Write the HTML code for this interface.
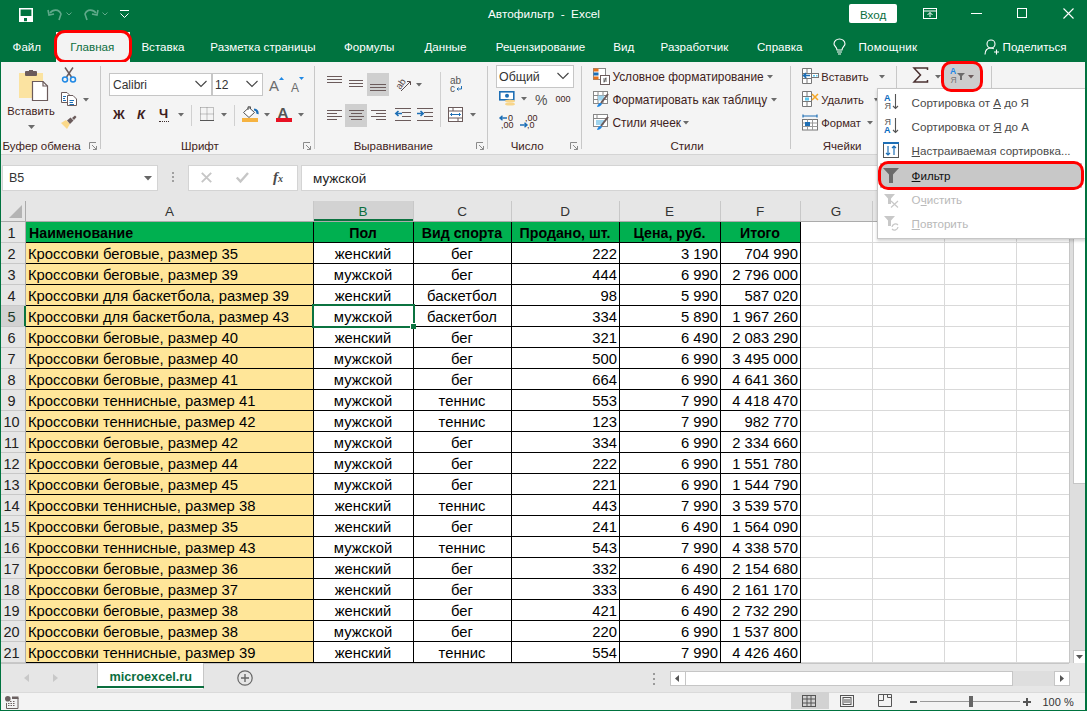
<!DOCTYPE html><html><head><meta charset="utf-8"><style>
*{margin:0;padding:0;box-sizing:border-box}
html,body{width:1087px;height:711px;overflow:hidden;background:#00733f}
body{position:relative;font-family:"Liberation Sans",sans-serif;}
div{position:absolute}
svg{position:absolute;overflow:visible}
.t{white-space:nowrap;line-height:1}
.tab{color:#fff;font-size:11.6px}
.rl{color:#3f1d20;font-size:11.5px}
.cell{font-size:14.8px;color:#000;white-space:nowrap;line-height:21px;overflow:hidden}
.hdr{font-size:14.2px;font-weight:bold;color:#000;white-space:nowrap;line-height:20px;overflow:hidden}
.mi{font-size:12px;color:#4a4a4a}
.mid{font-size:12px;color:#b4b4b4}
</style></head><body>
<svg style="left:19px;top:8px" width="14" height="14" viewBox="0 0 14 14"><path d="M0.8 0.8H13.2V13.2H0.8Z" fill="none" stroke="#fff" stroke-width="1.6"/><path d="M0.8 8H13.2V13.2H0.8Z" fill="#fff"/><rect x="5" y="10" width="3" height="3.2" fill="#00733f"/></svg>
<svg style="left:47px;top:8px" width="16" height="13" viewBox="0 0 16 13"><path d="M3 5 C6 1 12 1 14 6 L12 12" fill="none" stroke="#5fa98a" stroke-width="1.6"/><path d="M1 2 L2 7 L7 6" fill="none" stroke="#5fa98a" stroke-width="1.6"/></svg>
<svg style="left:66px;top:12px" width="6" height="4" viewBox="0 0 6 4"><path d="M0.5 0.5L3 3L5.5 0.5" fill="none" stroke="#5fa98a" stroke-width="1"/></svg>
<svg style="left:83px;top:8px" width="16" height="13" viewBox="0 0 16 13"><path d="M13 5 C10 1 4 1 2 6 L4 12" fill="none" stroke="#5fa98a" stroke-width="1.6"/><path d="M15 2 L14 7 L9 6" fill="none" stroke="#5fa98a" stroke-width="1.6"/></svg>
<svg style="left:102px;top:12px" width="6" height="4" viewBox="0 0 6 4"><path d="M0.5 0.5L3 3L5.5 0.5" fill="none" stroke="#5fa98a" stroke-width="1"/></svg>
<svg style="left:120px;top:10px" width="9" height="9" viewBox="0 0 9 9"><path d="M0 0.5H9" stroke="#fff" stroke-width="1"/><path d="M0.5 3.5L4.5 7.5L8.5 3.5" fill="none" stroke="#fff" stroke-width="1"/></svg>
<div class="t" style="left:488px;top:9px;color:#fff;font-size:11.8px">Автофильтр&nbsp; - &nbsp;Excel</div>
<div style="left:849px;top:4px;width:48px;height:19px;background:#fff;border-radius:2px"></div>
<div class="t" style="left:860px;top:9px;color:#0b6e3e;font-size:11.6px">Вход</div>
<svg style="left:923px;top:8px" width="14" height="11" viewBox="0 0 14 11"><rect x="0.5" y="0.5" width="13" height="10" fill="none" stroke="#fff"/><path d="M0.5 3H13.5" stroke="#fff"/><path d="M7 9V4.5M4.5 7L7 4.5L9.5 7" fill="none" stroke="#fff"/></svg>
<div style="left:971px;top:13px;width:11px;height:1px;background:#fff"></div>
<div style="left:1017px;top:8px;width:10px;height:10px;border:1px solid #fff"></div>
<svg style="left:1063px;top:8px" width="11" height="11" viewBox="0 0 11 11"><path d="M0.5 0.5L10.5 10.5M10.5 0.5L0.5 10.5" stroke="#fff" stroke-width="1.1"/></svg>
<div class="t" style="left:12.6px;top:41px;color:#fff;font-size:11.6px">Файл</div>
<div class="t" style="left:141.4px;top:41px;color:#fff;font-size:11.6px">Вставка</div>
<div class="t" style="left:210.3px;top:41px;color:#fff;font-size:11.6px">Разметка страницы</div>
<div class="t" style="left:344px;top:41px;color:#fff;font-size:11.6px">Формулы</div>
<div class="t" style="left:424.5px;top:41px;color:#fff;font-size:11.6px">Данные</div>
<div class="t" style="left:495.7px;top:41px;color:#fff;font-size:11.6px">Рецензирование</div>
<div class="t" style="left:613.3px;top:41px;color:#fff;font-size:11.6px">Вид</div>
<div class="t" style="left:660.6px;top:41px;color:#fff;font-size:11.6px">Разработчик</div>
<div class="t" style="left:757px;top:41px;color:#fff;font-size:11.6px">Справка</div>
<div style="left:56px;top:32px;width:74px;height:31px;background:#f3f3f3"></div>
<div class="t" style="left:70.2px;top:41px;color:#0b6e3e;font-size:11.6px">Главная</div>
<div style="left:54px;top:30px;width:78px;height:33px;border:3px solid #f00;border-radius:11px"></div>
<svg style="left:833px;top:39px" width="13" height="16" viewBox="0 0 13 16"><path d="M4 11 C4 8 1 7 1 5 A5.5 5 0 0 1 12 5 C12 7 9 8 9 11Z" fill="none" stroke="#fff" stroke-width="1.1"/><path d="M4 13H9M5 15H8" stroke="#fff" stroke-width="1.1"/></svg>
<div class="t" style="left:858.4px;top:41px;color:#fff;font-size:11.6px;letter-spacing:0.3px">Помощник</div>
<svg style="left:984px;top:39px" width="15" height="16" viewBox="0 0 15 16"><circle cx="7" cy="5" r="4" fill="none" stroke="#fff" stroke-width="1.1"/><path d="M1 15.5C1 11 3.5 9 7 9C8 9 9 9.3 9.8 9.7" fill="none" stroke="#fff" stroke-width="1.1"/><path d="M10 13H15M12.5 10.5V15.5" stroke="#fff" stroke-width="1.1"/></svg>
<div class="t" style="left:1002.6px;top:41px;color:#fff;font-size:11.6px">Поделиться</div>
<div style="left:1px;top:62px;width:1084px;height:92px;background:#f4f4f4"></div>
<div style="left:1px;top:154px;width:1084px;height:1px;background:#d4d4d4"></div>
<div style="left:100px;top:66px;width:1px;height:83px;background:#c8c8c8"></div>
<div style="left:314px;top:66px;width:1px;height:83px;background:#c8c8c8"></div>
<div style="left:487px;top:66px;width:1px;height:83px;background:#c8c8c8"></div>
<div style="left:581px;top:66px;width:1px;height:83px;background:#c8c8c8"></div>
<div style="left:790px;top:66px;width:1px;height:83px;background:#c8c8c8"></div>
<div style="left:896px;top:66px;width:1px;height:83px;background:#c8c8c8"></div>
<div style="left:991px;top:66px;width:1px;height:83px;background:#c8c8c8"></div>
<div class="t" style="left:2.5px;top:141px;color:#3f1d20;font-size:11.5px">Буфер обмена</div>
<div class="t" style="left:181px;top:141px;color:#3f1d20;font-size:11.5px">Шрифт</div>
<div class="t" style="left:353.7px;top:141px;color:#3f1d20;font-size:11.5px">Выравнивание</div>
<div class="t" style="left:510.7px;top:141px;color:#3f1d20;font-size:11.5px">Число</div>
<div class="t" style="left:670.5px;top:141px;color:#3f1d20;font-size:11.5px">Стили</div>
<div class="t" style="left:822.8px;top:141px;color:#3f1d20;font-size:11.5px">Ячейки</div>
<svg style="left:89px;top:142px" width="8" height="8" viewBox="0 0 8 8"><path d="M0.5 7V0.5H7" fill="none" stroke="#8a8a8a"/><path d="M3 3L7.5 7.5M4 7.5H7.5V4" fill="none" stroke="#8a8a8a"/></svg>
<svg style="left:303px;top:142px" width="8" height="8" viewBox="0 0 8 8"><path d="M0.5 7V0.5H7" fill="none" stroke="#8a8a8a"/><path d="M3 3L7.5 7.5M4 7.5H7.5V4" fill="none" stroke="#8a8a8a"/></svg>
<svg style="left:476px;top:142px" width="8" height="8" viewBox="0 0 8 8"><path d="M0.5 7V0.5H7" fill="none" stroke="#8a8a8a"/><path d="M3 3L7.5 7.5M4 7.5H7.5V4" fill="none" stroke="#8a8a8a"/></svg>
<svg style="left:570px;top:142px" width="8" height="8" viewBox="0 0 8 8"><path d="M0.5 7V0.5H7" fill="none" stroke="#8a8a8a"/><path d="M3 3L7.5 7.5M4 7.5H7.5V4" fill="none" stroke="#8a8a8a"/></svg>
<svg style="left:19px;top:70px" width="30" height="31" viewBox="0 0 30 31"><rect x="0" y="3" width="24" height="25" fill="#fbe3a1"/><rect x="6" y="1" width="12" height="5" rx="1" fill="#6b5b5b"/><rect x="10" y="0" width="4" height="3" fill="#6b5b5b"/><path d="M13.5 11.5H24L28.5 16V30.5H13.5Z" fill="#fff" stroke="#6b5b5b" stroke-width="1.2"/><path d="M24 11.5V16H28.5" fill="none" stroke="#6b5b5b" stroke-width="1.2"/></svg>
<div class="t" style="left:7.3px;top:106px;color:#3f1d20;font-size:11.2px">Вставить</div>
<svg style="left:28px;top:125px" width="7" height="4" viewBox="0 0 7 4"><path d="M0 0H7L3.5 4Z" fill="#6b6b6b"/></svg>
<svg style="left:62px;top:67px" width="14" height="16" viewBox="0 0 14 16"><path d="M3 0.5L9.5 10M11 0.5L4.5 10" stroke="#6b5b5b" stroke-width="1.5"/><circle cx="3" cy="12.5" r="2.5" fill="none" stroke="#1e88e5" stroke-width="1.5"/><circle cx="11" cy="12.5" r="2.5" fill="none" stroke="#1e88e5" stroke-width="1.5"/></svg>
<svg style="left:61px;top:92px" width="16" height="14" viewBox="0 0 16 14"><path d="M0.5 0.5H6L8 2.5V10.5H0.5Z" fill="#fff" stroke="#6b5b5b"/><path d="M6.5 3.5H12L15.5 7V13.5H6.5Z" fill="#fff" stroke="#6b5b5b"/><path d="M2 4.5H5M2 6.5H4M2 8.5H5M8.5 8.5H13M8.5 10.5H12M8.5 12.5H13" stroke="#1e6fb5"/></svg>
<svg style="left:83px;top:98px" width="6" height="4" viewBox="0 0 6 4"><path d="M0 0H6L3 3.5Z" fill="#6b6b6b"/></svg>
<svg style="left:61px;top:115px" width="16" height="14" viewBox="0 0 16 14"><path d="M0 8 L5 5 L9 9 L6 14 Z" fill="#fbd98a"/><path d="M6 5.5 L9.5 2.5 L12.5 5.5 L9 9Z" fill="#6b5b5b"/><path d="M11 3L14 0.5L15.5 2L13 5" fill="#6b5b5b"/></svg>
<div style="left:109px;top:73px;width:103px;height:23px;background:#fff;border:1px solid #c6c6c6"></div>
<div class="t" style="left:113px;top:79px;color:#333;font-size:12px">Calibri</div>
<svg style="left:195px;top:80px" width="12" height="8" viewBox="0 0 12 8"><path d="M0.5 1L6 6.5L11.5 1" fill="none" stroke="#444" stroke-width="1.1"/></svg>
<div style="left:212px;top:73px;width:51px;height:23px;background:#fff;border:1px solid #c6c6c6"></div>
<div class="t" style="left:215px;top:79px;color:#333;font-size:12px">12</div>
<svg style="left:246px;top:80px" width="12" height="8" viewBox="0 0 12 8"><path d="M0.5 1L6 6.5L11.5 1" fill="none" stroke="#444" stroke-width="1.1"/></svg>
<div class="t" style="left:269px;top:78px;color:#6b6b6b;font-size:15px">A</div>
<svg style="left:279px;top:77px" width="5" height="3" viewBox="0 0 5 3"><path d="M0 3L2.5 0L5 3Z" fill="#1e88e5"/></svg>
<div class="t" style="left:291px;top:82px;color:#6b6b6b;font-size:12px">A</div>
<svg style="left:299px;top:77px" width="5" height="3" viewBox="0 0 5 3"><path d="M0 0L2.5 3L5 0Z" fill="#1e88e5"/></svg>
<div class="t" style="left:113px;top:108px;color:#3f1d20;font-size:13px;font-weight:bold">Ж</div>
<div class="t" style="left:137px;top:108px;color:#3f1d20;font-size:13px;font-weight:bold;font-style:italic">К</div>
<div class="t" style="left:159px;top:107px;color:#3f1d20;font-size:13px;font-weight:bold">Ч</div>
<div style="left:159px;top:121px;width:10px;height:1px;border-top:1px dotted #3b2b2b"></div>
<svg style="left:178px;top:113px" width="6" height="4" viewBox="0 0 6 4"><path d="M0 0H6L3 3.5Z" fill="#6b6b6b"/></svg>
<svg style="left:221px;top:113px" width="6" height="4" viewBox="0 0 6 4"><path d="M0 0H6L3 3.5Z" fill="#6b6b6b"/></svg>
<svg style="left:264px;top:113px" width="6" height="4" viewBox="0 0 6 4"><path d="M0 0H6L3 3.5Z" fill="#6b6b6b"/></svg>
<svg style="left:298px;top:113px" width="6" height="4" viewBox="0 0 6 4"><path d="M0 0H6L3 3.5Z" fill="#6b6b6b"/></svg>
<div style="left:191px;top:105px;width:1px;height:21px;background:#d0d0d0"></div>
<div style="left:234px;top:105px;width:1px;height:21px;background:#d0d0d0"></div>
<svg style="left:200px;top:107px" width="14" height="14" viewBox="0 0 14 14"><path d="M0.5 0.5H13.5V13M0.5 0.5V13M7 0.5V13M0.5 7H13.5" fill="none" stroke="#8a8a8a" stroke-dasharray="1 1"/><path d="M0 13.5H14" stroke="#555"/></svg>
<svg style="left:242px;top:106px" width="17" height="12" viewBox="0 0 17 12"><path d="M1.5 6.5L7 1.5L12.5 6.5L7 11.5Z" fill="#fff" stroke="#555"/><path d="M6 4V0.8H8.5V3" fill="none" stroke="#555"/><path d="M12 3.5 Q16 4 15.5 8" fill="none" stroke="#1e6fb5" stroke-width="2.2"/></svg>
<div style="left:242px;top:118px;width:16px;height:4px;background:#f6b341"></div>
<div class="t" style="left:277.5px;top:105px;color:#555;font-size:15px;font-weight:bold">A</div>
<div style="left:276px;top:118px;width:16px;height:4px;background:#e81123"></div>
<div style="left:327px;top:76px;width:15px;height:1px;background:#6b5b5b"></div>
<div style="left:327px;top:79px;width:15px;height:1px;background:#6b5b5b"></div>
<div style="left:327px;top:82px;width:15px;height:1px;background:#6b5b5b"></div>
<div style="left:349px;top:80px;width:14px;height:1px;background:#6b5b5b"></div>
<div style="left:349px;top:83px;width:14px;height:1px;background:#6b5b5b"></div>
<div style="left:349px;top:86px;width:14px;height:1px;background:#6b5b5b"></div>
<div style="left:367px;top:73px;width:22px;height:23px;background:#cfcfcf"></div>
<div style="left:370px;top:84px;width:16px;height:1px;background:#6b5b5b"></div>
<div style="left:370px;top:87px;width:16px;height:1px;background:#6b5b5b"></div>
<div style="left:370px;top:90px;width:16px;height:1px;background:#6b5b5b"></div>
<svg style="left:395px;top:76px" width="17" height="16" viewBox="0 0 17 16"><text x="1" y="12" font-size="9.5" fill="#5a4a4a" font-family="Liberation Sans" transform="rotate(-55 5 9)">ab</text><path d="M6 15L15 6M12 5.5H15.5V9" fill="none" stroke="#5a4a4a" stroke-width="1"/></svg>
<svg style="left:416px;top:83px" width="6" height="4" viewBox="0 0 6 4"><path d="M0 0H6L3 3.5Z" fill="#6b6b6b"/></svg>
<div style="left:327px;top:110px;width:15px;height:1px;background:#6b5b5b"></div>
<div style="left:327px;top:113px;width:10px;height:1px;background:#6b5b5b"></div>
<div style="left:327px;top:116px;width:15px;height:1px;background:#6b5b5b"></div>
<div style="left:327px;top:119px;width:10px;height:1px;background:#6b5b5b"></div>
<div style="left:345px;top:104px;width:22px;height:23px;background:#cfcfcf"></div>
<div style="left:349px;top:110px;width:15px;height:1px;background:#6b5b5b"></div>
<div style="left:351px;top:113px;width:11px;height:1px;background:#6b5b5b"></div>
<div style="left:349px;top:116px;width:15px;height:1px;background:#6b5b5b"></div>
<div style="left:351px;top:119px;width:11px;height:1px;background:#6b5b5b"></div>
<div style="left:371px;top:110px;width:15px;height:1px;background:#6b5b5b"></div>
<div style="left:376px;top:113px;width:10px;height:1px;background:#6b5b5b"></div>
<div style="left:371px;top:116px;width:15px;height:1px;background:#6b5b5b"></div>
<div style="left:376px;top:119px;width:10px;height:1px;background:#6b5b5b"></div>
<div style="left:395px;top:108px;width:16px;height:1px;background:#6b5b5b"></div>
<div style="left:402px;top:112px;width:9px;height:1px;background:#6b5b5b"></div>
<div style="left:402px;top:116px;width:9px;height:1px;background:#6b5b5b"></div>
<div style="left:395px;top:120px;width:16px;height:1px;background:#6b5b5b"></div>
<svg style="left:395px;top:110px" width="7" height="7" viewBox="0 0 7 7"><path d="M7 3.5H1M3.5 1L0.8 3.5L3.5 6" fill="none" stroke="#1e6fb5" stroke-width="1.6"/></svg>
<div style="left:417px;top:108px;width:16px;height:1px;background:#6b5b5b"></div>
<div style="left:424px;top:112px;width:9px;height:1px;background:#6b5b5b"></div>
<div style="left:424px;top:116px;width:9px;height:1px;background:#6b5b5b"></div>
<div style="left:417px;top:120px;width:16px;height:1px;background:#6b5b5b"></div>
<svg style="left:417px;top:110px" width="7" height="7" viewBox="0 0 7 7"><path d="M0 3.5H6M3.5 1L6.2 3.5L3.5 6" fill="none" stroke="#1e6fb5" stroke-width="1.6"/></svg>
<div style="left:440px;top:72px;width:1px;height:55px;background:#d0d0d0"></div>
<div class="t" style="left:450px;top:76px;color:#555;font-size:10px">ab</div>
<div class="t" style="left:450px;top:84px;color:#555;font-size:10px">c</div>
<svg style="left:456px;top:86px" width="6" height="5" viewBox="0 0 6 5"><path d="M5.5 0V3H1M2.5 1.5L1 3L2.5 4.5" fill="none" stroke="#1e6fb5"/></svg>
<svg style="left:448px;top:107px" width="15" height="15" viewBox="0 0 15 15"><rect x="0.5" y="0.5" width="14" height="14" fill="#fff" stroke="#6b5b5b"/><path d="M0.5 4H14.5M0.5 11H14.5M5 0.5V4M10 11V14.5" stroke="#6b5b5b"/><path d="M2.5 7.5H12.5M4 6L2.5 7.5L4 9M11 6L12.5 7.5L11 9" fill="none" stroke="#1e6fb5"/></svg>
<svg style="left:470px;top:113px" width="6" height="4" viewBox="0 0 6 4"><path d="M0 0H6L3 3.5Z" fill="#6b6b6b"/></svg>
<div style="left:496px;top:65px;width:78px;height:23px;background:#fff;border:1px solid #c6c6c6"></div>
<div class="t" style="left:499px;top:71px;color:#333;font-size:12.4px">Общий</div>
<svg style="left:557px;top:72px" width="12" height="8" viewBox="0 0 12 8"><path d="M0.5 1L6 6.5L11.5 1" fill="none" stroke="#444" stroke-width="1.1"/></svg>
<svg style="left:499px;top:91px" width="17" height="16" viewBox="0 0 17 16"><rect x="0.8" y="0.8" width="14" height="8" fill="#fff" stroke="#1e6fb5" stroke-width="1.6"/><circle cx="8" cy="4.8" r="2" fill="#1e6fb5"/><ellipse cx="11" cy="10" rx="5" ry="1.6" fill="#f7d58a"/><ellipse cx="11" cy="13" rx="5" ry="1.6" fill="#f7d58a"/></svg>
<svg style="left:521px;top:97px" width="6" height="4" viewBox="0 0 6 4"><path d="M0 0H6L3 3.5Z" fill="#6b6b6b"/></svg>
<div class="t" style="left:535px;top:93px;color:#555;font-size:14px">%</div>
<div class="t" style="left:555.6px;top:95px;color:#3f1d20;font-size:9px">000</div>
<div class="t" style="left:508px;top:114px;color:#3f1d20;font-size:9px">0</div>
<div class="t" style="left:501px;top:121px;color:#3f1d20;font-size:9px">,00</div>
<svg style="left:499px;top:115px" width="8" height="6" viewBox="0 0 8 6"><path d="M8 3H1M3.5 0.8L1 3L3.5 5.2" fill="none" stroke="#1e6fb5" stroke-width="1.4"/></svg>
<div class="t" style="left:525px;top:114px;color:#3f1d20;font-size:9px">,00</div>
<div class="t" style="left:527px;top:121px;color:#3f1d20;font-size:9px">,0</div>
<svg style="left:520px;top:122px" width="8" height="6" viewBox="0 0 8 6"><path d="M0 3H7M4.5 0.8L7 3L4.5 5.2" fill="none" stroke="#1e6fb5" stroke-width="1.4"/></svg>
<svg style="left:593px;top:68px" width="17" height="17" viewBox="0 0 17 17"><rect x="0.5" y="0.5" width="12" height="11" fill="#fff" stroke="#888"/><rect x="0.5" y="0.5" width="5" height="3" fill="#e8711a"/><rect x="0.5" y="4.5" width="5" height="3" fill="#1e6fb5"/><rect x="0.5" y="8.5" width="5" height="3" fill="#e8711a"/><rect x="7.5" y="7.5" width="9" height="9" fill="#fff" stroke="#6b5b5b"/><path d="M10 11H14M10 13H14M13 9.5L11 14.5" stroke="#444" stroke-width="0.8"/></svg>
<div class="t" style="left:612.4px;top:72px;color:#3f1d20;font-size:11.9px">Условное форматирование</div>
<svg style="left:767px;top:75px" width="6" height="4" viewBox="0 0 6 4"><path d="M0 0H6L3 3.5Z" fill="#6b6b6b"/></svg>
<svg style="left:593px;top:91px" width="17" height="17" viewBox="0 0 17 17"><rect x="0.5" y="0.5" width="14" height="12" fill="#fff" stroke="#888"/><path d="M0.5 4.5H14.5M0.5 8.5H14.5M5 0.5V12.5M10 0.5V12.5" stroke="#888"/><rect x="5" y="4.5" width="6" height="5" fill="#9fd3ec"/><path d="M15 3L8 12" stroke="#6b5b5b" stroke-width="2"/><path d="M4 16C5 12 8 11 9 13C8 15 6 16 4 16Z" fill="#1e88e5"/></svg>
<div class="t" style="left:612.4px;top:95px;color:#3f1d20;font-size:11.9px">Форматировать как таблицу</div>
<svg style="left:771px;top:98px" width="6" height="4" viewBox="0 0 6 4"><path d="M0 0H6L3 3.5Z" fill="#6b6b6b"/></svg>
<svg style="left:593px;top:114px" width="17" height="17" viewBox="0 0 17 17"><rect x="0.5" y="0.5" width="14" height="12" fill="#fff" stroke="#888"/><path d="M0.5 4.5H14.5M4 0.5V4.5" stroke="#888"/><rect x="3" y="6" width="8" height="5" fill="#9fd3ec"/><path d="M15 3L8 12" stroke="#6b5b5b" stroke-width="2"/><path d="M4 16C5 12 8 11 9 13C8 15 6 16 4 16Z" fill="#1e88e5"/></svg>
<div class="t" style="left:612.4px;top:118px;color:#3f1d20;font-size:11.9px">Стили ячеек</div>
<svg style="left:683px;top:121px" width="6" height="4" viewBox="0 0 6 4"><path d="M0 0H6L3 3.5Z" fill="#6b6b6b"/></svg>
<svg style="left:802px;top:68px" width="17" height="16" viewBox="0 0 17 16"><path d="M0.5 0.5H9.5V15.5H0.5ZM0.5 5.5H9.5M0.5 10.5H9.5M5 0.5V5.5M5 10.5V15.5" fill="#fff" stroke="#777"/><rect x="9.5" y="5.5" width="7" height="4" fill="#fff" stroke="#777"/><rect x="11" y="7" width="2" height="1.5" fill="#5bc8f0"/><rect x="14" y="7" width="1.5" height="1.5" fill="#5bc8f0"/><path d="M8 7.5H1.8M4.2 5.2L1.6 7.5L4.2 9.8" fill="none" stroke="#1e6fb5" stroke-width="1.7"/></svg>
<div class="t" style="left:821.2px;top:72px;color:#3f1d20;font-size:11.2px">Вставить</div>
<svg style="left:879px;top:75px" width="6" height="4" viewBox="0 0 6 4"><path d="M0 0H6L3 3.5Z" fill="#6b6b6b"/></svg>
<svg style="left:802px;top:91px" width="17" height="16" viewBox="0 0 17 16"><path d="M0.5 0.5H9.5V15.5H0.5ZM0.5 5.5H9.5M0.5 10.5H9.5M5 0.5V5.5M5 10.5V15.5" fill="#fff" stroke="#777"/><rect x="3" y="6.5" width="4" height="3" fill="#5bc8f0"/><path d="M10 3L16 9M16 3L10 9" stroke="#f5a623" stroke-width="1.5"/></svg>
<div class="t" style="left:821.2px;top:95px;color:#3f1d20;font-size:11.2px">Удалить</div>
<svg style="left:874px;top:98px" width="4" height="4" viewBox="0 0 4 4"><path d="M0 0H4L2 3.5Z" fill="#6b6b6b"/></svg>
<svg style="left:802px;top:114px" width="16" height="17" viewBox="0 0 16 17"><path d="M1.5 2H14.5M1 0.5V3.5M15 0.5V3.5" stroke="#1e6fb5" stroke-width="1.2"/><rect x="0.5" y="5.5" width="15" height="10.5" fill="#fff" stroke="#777"/><path d="M0.5 9H15.5M0.5 12.5H15.5M5.5 5.5V16M10.5 5.5V16" stroke="#999"/><rect x="3" y="8" width="5" height="4" fill="#1e6fb5"/></svg>
<div class="t" style="left:821.2px;top:118px;color:#3f1d20;font-size:11.2px">Формат</div>
<svg style="left:867px;top:121px" width="6" height="4" viewBox="0 0 6 4"><path d="M0 0H6L3 3.5Z" fill="#6b6b6b"/></svg>
<svg style="left:912px;top:67px" width="17" height="16" viewBox="0 0 17 16"><path d="M15.5 3V1H2L8.5 8L2 15H15.5V13" fill="none" stroke="#4a3030" stroke-width="1.5"/></svg>
<svg style="left:935px;top:75px" width="6" height="4" viewBox="0 0 6 4"><path d="M0 0H6L3 3.5Z" fill="#6b6b6b"/></svg>
<div style="left:943px;top:63px;width:38px;height:27px;background:#cdcdcd;border-radius:4px;z-index:4"></div>
<div class="t" style="left:950px;top:67px;color:#1e88e5;font-size:8.5px;font-weight:bold;z-index:4">A</div>
<div class="t" style="left:950.5px;top:76px;color:#777;font-size:8.5px;z-index:4">Я</div>
<svg style="left:957px;top:73px;z-index:4" width="8" height="7" viewBox="0 0 8 7"><path d="M0 0H8L5 3V7H3V3Z" fill="#6b6b6b"/></svg>
<svg style="left:968px;top:75px;z-index:4" width="6" height="4" viewBox="0 0 6 4"><path d="M0 0H6L3 3.5Z" fill="#6b5b5b"/></svg>
<div style="left:941px;top:61px;width:42px;height:31px;border:3px solid #f00;border-radius:10px;z-index:5"></div>
<div style="left:1px;top:155px;width:1084px;height:46px;background:#e6e6e6"></div>
<div style="left:2px;top:165px;width:156px;height:26px;background:#fff;border:1px solid #d4d4d4"></div>
<div class="t" style="left:9px;top:172px;color:#333;font-size:12.5px">B5</div>
<svg style="left:144px;top:176px" width="8" height="5" viewBox="0 0 8 5"><path d="M0 0H8L4 4.5Z" fill="#666"/></svg>
<div style="left:172px;top:172px;width:2px;height:2px;background:#a0a0a0"></div>
<div style="left:172px;top:176px;width:2px;height:2px;background:#a0a0a0"></div>
<div style="left:172px;top:180px;width:2px;height:2px;background:#a0a0a0"></div>
<div style="left:188px;top:165px;width:110px;height:26px;background:#fff;border:1px solid #d4d4d4"></div>
<svg style="left:201px;top:172px" width="11" height="11" viewBox="0 0 11 11"><path d="M0.8 0.8L10.2 10.2M10.2 0.8L0.8 10.2" stroke="#c6c6c6" stroke-width="1.9"/></svg>
<svg style="left:236px;top:172px" width="13" height="11" viewBox="0 0 13 11"><path d="M0.8 5.5L4.5 9.5L12 1" fill="none" stroke="#c6c6c6" stroke-width="2.4"/></svg>
<div class="t" style="left:273px;top:170px;color:#4a4a4a;font-size:15px;font-weight:bold;font-style:italic;font-family:'Liberation Serif'">f<span style='font-size:10px'>x</span></div>
<div style="left:301px;top:165px;width:784px;height:26px;background:#fff;border:1px solid #d4d4d4;border-right:none"></div>
<div class="t" style="left:313px;top:172px;color:#222;font-size:13.5px">мужской</div>
<div style="left:1px;top:201px;width:1068px;height:21px;background:#e6e6e6"></div>
<div style="left:1px;top:221px;width:1068px;height:1px;background:#ababab"></div>
<svg style="left:9px;top:205px" width="13" height="13" viewBox="0 0 13 13"><path d="M13 0V13H0Z" fill="#b4b4b4"/></svg>
<div style="left:26px;top:222px;width:1043px;height:441px;background:#fff"></div>
<div style="left:1px;top:222px;width:25px;height:441px;background:#e6e6e6"></div>
<div style="left:25px;top:201px;width:1px;height:462px;background:#ababab"></div>
<div style="left:313px;top:201px;width:100px;height:20px;background:#d2d2d2"></div>
<div style="left:313px;top:219px;width:100px;height:2px;background:#0b7340"></div>
<div style="left:1px;top:306px;width:24px;height:21px;background:#d2d2d2"></div>
<div style="left:24px;top:306px;width:2px;height:21px;background:#0b7340"></div>
<div style="left:313px;top:201px;width:1px;height:20px;background:#c8c8c8"></div>
<div class="t" style="left:26px;top:205px;width:287px;text-align:center;font-size:13.5px;color:#333">A</div>
<div style="left:413px;top:201px;width:1px;height:20px;background:#c8c8c8"></div>
<div class="t" style="left:313px;top:205px;width:100px;text-align:center;font-size:13.5px;color:#0b6e3e">B</div>
<div style="left:511px;top:201px;width:1px;height:20px;background:#c8c8c8"></div>
<div class="t" style="left:413px;top:205px;width:98px;text-align:center;font-size:13.5px;color:#333">C</div>
<div style="left:619px;top:201px;width:1px;height:20px;background:#c8c8c8"></div>
<div class="t" style="left:511px;top:205px;width:108px;text-align:center;font-size:13.5px;color:#333">D</div>
<div style="left:720px;top:201px;width:1px;height:20px;background:#c8c8c8"></div>
<div class="t" style="left:619px;top:205px;width:101px;text-align:center;font-size:13.5px;color:#333">E</div>
<div style="left:800px;top:201px;width:1px;height:20px;background:#c8c8c8"></div>
<div class="t" style="left:720px;top:205px;width:80px;text-align:center;font-size:13.5px;color:#333">F</div>
<div style="left:872px;top:201px;width:1px;height:20px;background:#c8c8c8"></div>
<div class="t" style="left:800px;top:205px;width:72px;text-align:center;font-size:13.5px;color:#333">G</div>
<div style="left:944px;top:201px;width:1px;height:20px;background:#c8c8c8"></div>
<div class="t" style="left:872px;top:205px;width:72px;text-align:center;font-size:13.5px;color:#333">H</div>
<div style="left:1016px;top:201px;width:1px;height:20px;background:#c8c8c8"></div>
<div class="t" style="left:944px;top:205px;width:72px;text-align:center;font-size:13.5px;color:#333">I</div>
<div style="left:1069px;top:201px;width:1px;height:20px;background:#c8c8c8"></div>
<div class="t" style="left:1016px;top:205px;width:53px;text-align:center;font-size:13.5px;color:#333">J</div>
<div style="left:26px;top:242px;width:1043px;height:1px;background:#d9d9d9"></div>
<div style="left:1px;top:242px;width:24px;height:1px;background:#c8c8c8"></div>
<div style="left:26px;top:263px;width:1043px;height:1px;background:#d9d9d9"></div>
<div style="left:1px;top:263px;width:24px;height:1px;background:#c8c8c8"></div>
<div style="left:26px;top:284px;width:1043px;height:1px;background:#d9d9d9"></div>
<div style="left:1px;top:284px;width:24px;height:1px;background:#c8c8c8"></div>
<div style="left:26px;top:305px;width:1043px;height:1px;background:#d9d9d9"></div>
<div style="left:1px;top:305px;width:24px;height:1px;background:#c8c8c8"></div>
<div style="left:26px;top:326px;width:1043px;height:1px;background:#d9d9d9"></div>
<div style="left:1px;top:326px;width:24px;height:1px;background:#c8c8c8"></div>
<div style="left:26px;top:347px;width:1043px;height:1px;background:#d9d9d9"></div>
<div style="left:1px;top:347px;width:24px;height:1px;background:#c8c8c8"></div>
<div style="left:26px;top:368px;width:1043px;height:1px;background:#d9d9d9"></div>
<div style="left:1px;top:368px;width:24px;height:1px;background:#c8c8c8"></div>
<div style="left:26px;top:389px;width:1043px;height:1px;background:#d9d9d9"></div>
<div style="left:1px;top:389px;width:24px;height:1px;background:#c8c8c8"></div>
<div style="left:26px;top:410px;width:1043px;height:1px;background:#d9d9d9"></div>
<div style="left:1px;top:410px;width:24px;height:1px;background:#c8c8c8"></div>
<div style="left:26px;top:431px;width:1043px;height:1px;background:#d9d9d9"></div>
<div style="left:1px;top:431px;width:24px;height:1px;background:#c8c8c8"></div>
<div style="left:26px;top:452px;width:1043px;height:1px;background:#d9d9d9"></div>
<div style="left:1px;top:452px;width:24px;height:1px;background:#c8c8c8"></div>
<div style="left:26px;top:473px;width:1043px;height:1px;background:#d9d9d9"></div>
<div style="left:1px;top:473px;width:24px;height:1px;background:#c8c8c8"></div>
<div style="left:26px;top:494px;width:1043px;height:1px;background:#d9d9d9"></div>
<div style="left:1px;top:494px;width:24px;height:1px;background:#c8c8c8"></div>
<div style="left:26px;top:515px;width:1043px;height:1px;background:#d9d9d9"></div>
<div style="left:1px;top:515px;width:24px;height:1px;background:#c8c8c8"></div>
<div style="left:26px;top:536px;width:1043px;height:1px;background:#d9d9d9"></div>
<div style="left:1px;top:536px;width:24px;height:1px;background:#c8c8c8"></div>
<div style="left:26px;top:557px;width:1043px;height:1px;background:#d9d9d9"></div>
<div style="left:1px;top:557px;width:24px;height:1px;background:#c8c8c8"></div>
<div style="left:26px;top:578px;width:1043px;height:1px;background:#d9d9d9"></div>
<div style="left:1px;top:578px;width:24px;height:1px;background:#c8c8c8"></div>
<div style="left:26px;top:599px;width:1043px;height:1px;background:#d9d9d9"></div>
<div style="left:1px;top:599px;width:24px;height:1px;background:#c8c8c8"></div>
<div style="left:26px;top:620px;width:1043px;height:1px;background:#d9d9d9"></div>
<div style="left:1px;top:620px;width:24px;height:1px;background:#c8c8c8"></div>
<div style="left:26px;top:641px;width:1043px;height:1px;background:#d9d9d9"></div>
<div style="left:1px;top:641px;width:24px;height:1px;background:#c8c8c8"></div>
<div style="left:26px;top:662px;width:1043px;height:1px;background:#d9d9d9"></div>
<div style="left:1px;top:662px;width:24px;height:1px;background:#c8c8c8"></div>
<div style="left:313px;top:222px;width:1px;height:441px;background:#d9d9d9"></div>
<div style="left:413px;top:222px;width:1px;height:441px;background:#d9d9d9"></div>
<div style="left:511px;top:222px;width:1px;height:441px;background:#d9d9d9"></div>
<div style="left:619px;top:222px;width:1px;height:441px;background:#d9d9d9"></div>
<div style="left:720px;top:222px;width:1px;height:441px;background:#d9d9d9"></div>
<div style="left:800px;top:222px;width:1px;height:441px;background:#d9d9d9"></div>
<div style="left:872px;top:222px;width:1px;height:441px;background:#d9d9d9"></div>
<div style="left:944px;top:222px;width:1px;height:441px;background:#d9d9d9"></div>
<div style="left:1016px;top:222px;width:1px;height:441px;background:#d9d9d9"></div>
<div style="left:26px;top:222px;width:287px;height:21px;background:#00b050"></div>
<div style="left:313px;top:222px;width:100px;height:21px;background:#00b050"></div>
<div style="left:413px;top:222px;width:98px;height:21px;background:#00b050"></div>
<div style="left:511px;top:222px;width:108px;height:21px;background:#00b050"></div>
<div style="left:619px;top:222px;width:101px;height:21px;background:#00b050"></div>
<div style="left:720px;top:222px;width:80px;height:21px;background:#00b050"></div>
<div style="left:26px;top:243px;width:287px;height:21px;background:#ffe699"></div>
<div style="left:313px;top:243px;width:100px;height:21px;background:#fff"></div>
<div style="left:413px;top:243px;width:98px;height:21px;background:#fff"></div>
<div style="left:511px;top:243px;width:108px;height:21px;background:#fff"></div>
<div style="left:619px;top:243px;width:101px;height:21px;background:#fff"></div>
<div style="left:720px;top:243px;width:80px;height:21px;background:#fff"></div>
<div style="left:26px;top:264px;width:287px;height:21px;background:#ffe699"></div>
<div style="left:313px;top:264px;width:100px;height:21px;background:#fff"></div>
<div style="left:413px;top:264px;width:98px;height:21px;background:#fff"></div>
<div style="left:511px;top:264px;width:108px;height:21px;background:#fff"></div>
<div style="left:619px;top:264px;width:101px;height:21px;background:#fff"></div>
<div style="left:720px;top:264px;width:80px;height:21px;background:#fff"></div>
<div style="left:26px;top:285px;width:287px;height:21px;background:#ffe699"></div>
<div style="left:313px;top:285px;width:100px;height:21px;background:#fff"></div>
<div style="left:413px;top:285px;width:98px;height:21px;background:#fff"></div>
<div style="left:511px;top:285px;width:108px;height:21px;background:#fff"></div>
<div style="left:619px;top:285px;width:101px;height:21px;background:#fff"></div>
<div style="left:720px;top:285px;width:80px;height:21px;background:#fff"></div>
<div style="left:26px;top:306px;width:287px;height:21px;background:#ffe699"></div>
<div style="left:313px;top:306px;width:100px;height:21px;background:#fff"></div>
<div style="left:413px;top:306px;width:98px;height:21px;background:#fff"></div>
<div style="left:511px;top:306px;width:108px;height:21px;background:#fff"></div>
<div style="left:619px;top:306px;width:101px;height:21px;background:#fff"></div>
<div style="left:720px;top:306px;width:80px;height:21px;background:#fff"></div>
<div style="left:26px;top:327px;width:287px;height:21px;background:#ffe699"></div>
<div style="left:313px;top:327px;width:100px;height:21px;background:#fff"></div>
<div style="left:413px;top:327px;width:98px;height:21px;background:#fff"></div>
<div style="left:511px;top:327px;width:108px;height:21px;background:#fff"></div>
<div style="left:619px;top:327px;width:101px;height:21px;background:#fff"></div>
<div style="left:720px;top:327px;width:80px;height:21px;background:#fff"></div>
<div style="left:26px;top:348px;width:287px;height:21px;background:#ffe699"></div>
<div style="left:313px;top:348px;width:100px;height:21px;background:#fff"></div>
<div style="left:413px;top:348px;width:98px;height:21px;background:#fff"></div>
<div style="left:511px;top:348px;width:108px;height:21px;background:#fff"></div>
<div style="left:619px;top:348px;width:101px;height:21px;background:#fff"></div>
<div style="left:720px;top:348px;width:80px;height:21px;background:#fff"></div>
<div style="left:26px;top:369px;width:287px;height:21px;background:#ffe699"></div>
<div style="left:313px;top:369px;width:100px;height:21px;background:#fff"></div>
<div style="left:413px;top:369px;width:98px;height:21px;background:#fff"></div>
<div style="left:511px;top:369px;width:108px;height:21px;background:#fff"></div>
<div style="left:619px;top:369px;width:101px;height:21px;background:#fff"></div>
<div style="left:720px;top:369px;width:80px;height:21px;background:#fff"></div>
<div style="left:26px;top:390px;width:287px;height:21px;background:#ffe699"></div>
<div style="left:313px;top:390px;width:100px;height:21px;background:#fff"></div>
<div style="left:413px;top:390px;width:98px;height:21px;background:#fff"></div>
<div style="left:511px;top:390px;width:108px;height:21px;background:#fff"></div>
<div style="left:619px;top:390px;width:101px;height:21px;background:#fff"></div>
<div style="left:720px;top:390px;width:80px;height:21px;background:#fff"></div>
<div style="left:26px;top:411px;width:287px;height:21px;background:#ffe699"></div>
<div style="left:313px;top:411px;width:100px;height:21px;background:#fff"></div>
<div style="left:413px;top:411px;width:98px;height:21px;background:#fff"></div>
<div style="left:511px;top:411px;width:108px;height:21px;background:#fff"></div>
<div style="left:619px;top:411px;width:101px;height:21px;background:#fff"></div>
<div style="left:720px;top:411px;width:80px;height:21px;background:#fff"></div>
<div style="left:26px;top:432px;width:287px;height:21px;background:#ffe699"></div>
<div style="left:313px;top:432px;width:100px;height:21px;background:#fff"></div>
<div style="left:413px;top:432px;width:98px;height:21px;background:#fff"></div>
<div style="left:511px;top:432px;width:108px;height:21px;background:#fff"></div>
<div style="left:619px;top:432px;width:101px;height:21px;background:#fff"></div>
<div style="left:720px;top:432px;width:80px;height:21px;background:#fff"></div>
<div style="left:26px;top:453px;width:287px;height:21px;background:#ffe699"></div>
<div style="left:313px;top:453px;width:100px;height:21px;background:#fff"></div>
<div style="left:413px;top:453px;width:98px;height:21px;background:#fff"></div>
<div style="left:511px;top:453px;width:108px;height:21px;background:#fff"></div>
<div style="left:619px;top:453px;width:101px;height:21px;background:#fff"></div>
<div style="left:720px;top:453px;width:80px;height:21px;background:#fff"></div>
<div style="left:26px;top:474px;width:287px;height:21px;background:#ffe699"></div>
<div style="left:313px;top:474px;width:100px;height:21px;background:#fff"></div>
<div style="left:413px;top:474px;width:98px;height:21px;background:#fff"></div>
<div style="left:511px;top:474px;width:108px;height:21px;background:#fff"></div>
<div style="left:619px;top:474px;width:101px;height:21px;background:#fff"></div>
<div style="left:720px;top:474px;width:80px;height:21px;background:#fff"></div>
<div style="left:26px;top:495px;width:287px;height:21px;background:#ffe699"></div>
<div style="left:313px;top:495px;width:100px;height:21px;background:#fff"></div>
<div style="left:413px;top:495px;width:98px;height:21px;background:#fff"></div>
<div style="left:511px;top:495px;width:108px;height:21px;background:#fff"></div>
<div style="left:619px;top:495px;width:101px;height:21px;background:#fff"></div>
<div style="left:720px;top:495px;width:80px;height:21px;background:#fff"></div>
<div style="left:26px;top:516px;width:287px;height:21px;background:#ffe699"></div>
<div style="left:313px;top:516px;width:100px;height:21px;background:#fff"></div>
<div style="left:413px;top:516px;width:98px;height:21px;background:#fff"></div>
<div style="left:511px;top:516px;width:108px;height:21px;background:#fff"></div>
<div style="left:619px;top:516px;width:101px;height:21px;background:#fff"></div>
<div style="left:720px;top:516px;width:80px;height:21px;background:#fff"></div>
<div style="left:26px;top:537px;width:287px;height:21px;background:#ffe699"></div>
<div style="left:313px;top:537px;width:100px;height:21px;background:#fff"></div>
<div style="left:413px;top:537px;width:98px;height:21px;background:#fff"></div>
<div style="left:511px;top:537px;width:108px;height:21px;background:#fff"></div>
<div style="left:619px;top:537px;width:101px;height:21px;background:#fff"></div>
<div style="left:720px;top:537px;width:80px;height:21px;background:#fff"></div>
<div style="left:26px;top:558px;width:287px;height:21px;background:#ffe699"></div>
<div style="left:313px;top:558px;width:100px;height:21px;background:#fff"></div>
<div style="left:413px;top:558px;width:98px;height:21px;background:#fff"></div>
<div style="left:511px;top:558px;width:108px;height:21px;background:#fff"></div>
<div style="left:619px;top:558px;width:101px;height:21px;background:#fff"></div>
<div style="left:720px;top:558px;width:80px;height:21px;background:#fff"></div>
<div style="left:26px;top:579px;width:287px;height:21px;background:#ffe699"></div>
<div style="left:313px;top:579px;width:100px;height:21px;background:#fff"></div>
<div style="left:413px;top:579px;width:98px;height:21px;background:#fff"></div>
<div style="left:511px;top:579px;width:108px;height:21px;background:#fff"></div>
<div style="left:619px;top:579px;width:101px;height:21px;background:#fff"></div>
<div style="left:720px;top:579px;width:80px;height:21px;background:#fff"></div>
<div style="left:26px;top:600px;width:287px;height:21px;background:#ffe699"></div>
<div style="left:313px;top:600px;width:100px;height:21px;background:#fff"></div>
<div style="left:413px;top:600px;width:98px;height:21px;background:#fff"></div>
<div style="left:511px;top:600px;width:108px;height:21px;background:#fff"></div>
<div style="left:619px;top:600px;width:101px;height:21px;background:#fff"></div>
<div style="left:720px;top:600px;width:80px;height:21px;background:#fff"></div>
<div style="left:26px;top:621px;width:287px;height:21px;background:#ffe699"></div>
<div style="left:313px;top:621px;width:100px;height:21px;background:#fff"></div>
<div style="left:413px;top:621px;width:98px;height:21px;background:#fff"></div>
<div style="left:511px;top:621px;width:108px;height:21px;background:#fff"></div>
<div style="left:619px;top:621px;width:101px;height:21px;background:#fff"></div>
<div style="left:720px;top:621px;width:80px;height:21px;background:#fff"></div>
<div style="left:26px;top:642px;width:287px;height:21px;background:#ffe699"></div>
<div style="left:313px;top:642px;width:100px;height:21px;background:#fff"></div>
<div style="left:413px;top:642px;width:98px;height:21px;background:#fff"></div>
<div style="left:511px;top:642px;width:108px;height:21px;background:#fff"></div>
<div style="left:619px;top:642px;width:101px;height:21px;background:#fff"></div>
<div style="left:720px;top:642px;width:80px;height:21px;background:#fff"></div>
<div style="left:26px;top:242px;width:775px;height:1px;background:#000"></div>
<div style="left:26px;top:263px;width:775px;height:1px;background:#000"></div>
<div style="left:26px;top:284px;width:775px;height:1px;background:#000"></div>
<div style="left:26px;top:305px;width:775px;height:1px;background:#000"></div>
<div style="left:26px;top:326px;width:775px;height:1px;background:#000"></div>
<div style="left:26px;top:347px;width:775px;height:1px;background:#000"></div>
<div style="left:26px;top:368px;width:775px;height:1px;background:#000"></div>
<div style="left:26px;top:389px;width:775px;height:1px;background:#000"></div>
<div style="left:26px;top:410px;width:775px;height:1px;background:#000"></div>
<div style="left:26px;top:431px;width:775px;height:1px;background:#000"></div>
<div style="left:26px;top:452px;width:775px;height:1px;background:#000"></div>
<div style="left:26px;top:473px;width:775px;height:1px;background:#000"></div>
<div style="left:26px;top:494px;width:775px;height:1px;background:#000"></div>
<div style="left:26px;top:515px;width:775px;height:1px;background:#000"></div>
<div style="left:26px;top:536px;width:775px;height:1px;background:#000"></div>
<div style="left:26px;top:557px;width:775px;height:1px;background:#000"></div>
<div style="left:26px;top:578px;width:775px;height:1px;background:#000"></div>
<div style="left:26px;top:599px;width:775px;height:1px;background:#000"></div>
<div style="left:26px;top:620px;width:775px;height:1px;background:#000"></div>
<div style="left:26px;top:641px;width:775px;height:1px;background:#000"></div>
<div style="left:26px;top:662px;width:775px;height:1px;background:#000"></div>
<div style="left:313px;top:222px;width:1px;height:441px;background:#000"></div>
<div style="left:413px;top:222px;width:1px;height:441px;background:#000"></div>
<div style="left:511px;top:222px;width:1px;height:441px;background:#000"></div>
<div style="left:619px;top:222px;width:1px;height:441px;background:#000"></div>
<div style="left:720px;top:222px;width:1px;height:441px;background:#000"></div>
<div style="left:800px;top:222px;width:1px;height:441px;background:#000"></div>
<div class="hdr" style="left:29px;top:223px;width:283px">Наименование</div>
<div class="hdr" style="left:313px;top:223px;width:100px;text-align:center">Пол</div>
<div class="hdr" style="left:413px;top:223px;width:98px;text-align:center">Вид спорта</div>
<div class="hdr" style="left:511px;top:223px;width:108px;text-align:center">Продано, шт.</div>
<div class="hdr" style="left:619px;top:223px;width:101px;text-align:center">Цена, руб.</div>
<div class="hdr" style="left:720px;top:223px;width:80px;text-align:center">Итого</div>
<div class="cell" style="left:28px;top:244px;width:283px">Кроссовки беговые, размер 35</div>
<div class="cell" style="left:313px;top:244px;width:100px;text-align:center">женский</div>
<div class="cell" style="left:413px;top:244px;width:98px;text-align:center">бег</div>
<div class="cell" style="left:511px;top:244px;width:106px;text-align:right">222</div>
<div class="cell" style="left:619px;top:244px;width:99px;text-align:right">3 190</div>
<div class="cell" style="left:720px;top:244px;width:78px;text-align:right">704 990</div>
<div class="cell" style="left:28px;top:265px;width:283px">Кроссовки беговые, размер 39</div>
<div class="cell" style="left:313px;top:265px;width:100px;text-align:center">мужской</div>
<div class="cell" style="left:413px;top:265px;width:98px;text-align:center">бег</div>
<div class="cell" style="left:511px;top:265px;width:106px;text-align:right">444</div>
<div class="cell" style="left:619px;top:265px;width:99px;text-align:right">6 990</div>
<div class="cell" style="left:720px;top:265px;width:78px;text-align:right">2 796 000</div>
<div class="cell" style="left:28px;top:286px;width:283px">Кроссовки для баскетбола, размер 39</div>
<div class="cell" style="left:313px;top:286px;width:100px;text-align:center">женский</div>
<div class="cell" style="left:413px;top:286px;width:98px;text-align:center">баскетбол</div>
<div class="cell" style="left:511px;top:286px;width:106px;text-align:right">98</div>
<div class="cell" style="left:619px;top:286px;width:99px;text-align:right">5 990</div>
<div class="cell" style="left:720px;top:286px;width:78px;text-align:right">587 020</div>
<div class="cell" style="left:28px;top:307px;width:283px">Кроссовки для баскетбола, размер 43</div>
<div class="cell" style="left:313px;top:307px;width:100px;text-align:center">мужской</div>
<div class="cell" style="left:413px;top:307px;width:98px;text-align:center">баскетбол</div>
<div class="cell" style="left:511px;top:307px;width:106px;text-align:right">334</div>
<div class="cell" style="left:619px;top:307px;width:99px;text-align:right">5 890</div>
<div class="cell" style="left:720px;top:307px;width:78px;text-align:right">1 967 260</div>
<div class="cell" style="left:28px;top:328px;width:283px">Кроссовки беговые, размер 40</div>
<div class="cell" style="left:313px;top:328px;width:100px;text-align:center">женский</div>
<div class="cell" style="left:413px;top:328px;width:98px;text-align:center">бег</div>
<div class="cell" style="left:511px;top:328px;width:106px;text-align:right">321</div>
<div class="cell" style="left:619px;top:328px;width:99px;text-align:right">6 490</div>
<div class="cell" style="left:720px;top:328px;width:78px;text-align:right">2 083 290</div>
<div class="cell" style="left:28px;top:349px;width:283px">Кроссовки беговые, размер 40</div>
<div class="cell" style="left:313px;top:349px;width:100px;text-align:center">мужской</div>
<div class="cell" style="left:413px;top:349px;width:98px;text-align:center">бег</div>
<div class="cell" style="left:511px;top:349px;width:106px;text-align:right">500</div>
<div class="cell" style="left:619px;top:349px;width:99px;text-align:right">6 990</div>
<div class="cell" style="left:720px;top:349px;width:78px;text-align:right">3 495 000</div>
<div class="cell" style="left:28px;top:370px;width:283px">Кроссовки беговые, размер 41</div>
<div class="cell" style="left:313px;top:370px;width:100px;text-align:center">мужской</div>
<div class="cell" style="left:413px;top:370px;width:98px;text-align:center">бег</div>
<div class="cell" style="left:511px;top:370px;width:106px;text-align:right">664</div>
<div class="cell" style="left:619px;top:370px;width:99px;text-align:right">6 990</div>
<div class="cell" style="left:720px;top:370px;width:78px;text-align:right">4 641 360</div>
<div class="cell" style="left:28px;top:391px;width:283px">Кроссовки теннисные, размер 41</div>
<div class="cell" style="left:313px;top:391px;width:100px;text-align:center">мужской</div>
<div class="cell" style="left:413px;top:391px;width:98px;text-align:center">теннис</div>
<div class="cell" style="left:511px;top:391px;width:106px;text-align:right">553</div>
<div class="cell" style="left:619px;top:391px;width:99px;text-align:right">7 990</div>
<div class="cell" style="left:720px;top:391px;width:78px;text-align:right">4 418 470</div>
<div class="cell" style="left:28px;top:412px;width:283px">Кроссовки теннисные, размер 42</div>
<div class="cell" style="left:313px;top:412px;width:100px;text-align:center">мужской</div>
<div class="cell" style="left:413px;top:412px;width:98px;text-align:center">теннис</div>
<div class="cell" style="left:511px;top:412px;width:106px;text-align:right">123</div>
<div class="cell" style="left:619px;top:412px;width:99px;text-align:right">7 990</div>
<div class="cell" style="left:720px;top:412px;width:78px;text-align:right">982 770</div>
<div class="cell" style="left:28px;top:433px;width:283px">Кроссовки беговые, размер 42</div>
<div class="cell" style="left:313px;top:433px;width:100px;text-align:center">мужской</div>
<div class="cell" style="left:413px;top:433px;width:98px;text-align:center">бег</div>
<div class="cell" style="left:511px;top:433px;width:106px;text-align:right">334</div>
<div class="cell" style="left:619px;top:433px;width:99px;text-align:right">6 990</div>
<div class="cell" style="left:720px;top:433px;width:78px;text-align:right">2 334 660</div>
<div class="cell" style="left:28px;top:454px;width:283px">Кроссовки беговые, размер 44</div>
<div class="cell" style="left:313px;top:454px;width:100px;text-align:center">мужской</div>
<div class="cell" style="left:413px;top:454px;width:98px;text-align:center">бег</div>
<div class="cell" style="left:511px;top:454px;width:106px;text-align:right">222</div>
<div class="cell" style="left:619px;top:454px;width:99px;text-align:right">6 990</div>
<div class="cell" style="left:720px;top:454px;width:78px;text-align:right">1 551 780</div>
<div class="cell" style="left:28px;top:475px;width:283px">Кроссовки беговые, размер 45</div>
<div class="cell" style="left:313px;top:475px;width:100px;text-align:center">мужской</div>
<div class="cell" style="left:413px;top:475px;width:98px;text-align:center">бег</div>
<div class="cell" style="left:511px;top:475px;width:106px;text-align:right">221</div>
<div class="cell" style="left:619px;top:475px;width:99px;text-align:right">6 990</div>
<div class="cell" style="left:720px;top:475px;width:78px;text-align:right">1 544 790</div>
<div class="cell" style="left:28px;top:496px;width:283px">Кроссовки теннисные, размер 38</div>
<div class="cell" style="left:313px;top:496px;width:100px;text-align:center">женский</div>
<div class="cell" style="left:413px;top:496px;width:98px;text-align:center">теннис</div>
<div class="cell" style="left:511px;top:496px;width:106px;text-align:right">443</div>
<div class="cell" style="left:619px;top:496px;width:99px;text-align:right">7 990</div>
<div class="cell" style="left:720px;top:496px;width:78px;text-align:right">3 539 570</div>
<div class="cell" style="left:28px;top:517px;width:283px">Кроссовки беговые, размер 35</div>
<div class="cell" style="left:313px;top:517px;width:100px;text-align:center">женский</div>
<div class="cell" style="left:413px;top:517px;width:98px;text-align:center">бег</div>
<div class="cell" style="left:511px;top:517px;width:106px;text-align:right">241</div>
<div class="cell" style="left:619px;top:517px;width:99px;text-align:right">6 490</div>
<div class="cell" style="left:720px;top:517px;width:78px;text-align:right">1 564 090</div>
<div class="cell" style="left:28px;top:538px;width:283px">Кроссовки теннисные, размер 43</div>
<div class="cell" style="left:313px;top:538px;width:100px;text-align:center">мужской</div>
<div class="cell" style="left:413px;top:538px;width:98px;text-align:center">теннис</div>
<div class="cell" style="left:511px;top:538px;width:106px;text-align:right">543</div>
<div class="cell" style="left:619px;top:538px;width:99px;text-align:right">7 990</div>
<div class="cell" style="left:720px;top:538px;width:78px;text-align:right">4 338 570</div>
<div class="cell" style="left:28px;top:559px;width:283px">Кроссовки беговые, размер 36</div>
<div class="cell" style="left:313px;top:559px;width:100px;text-align:center">женский</div>
<div class="cell" style="left:413px;top:559px;width:98px;text-align:center">бег</div>
<div class="cell" style="left:511px;top:559px;width:106px;text-align:right">332</div>
<div class="cell" style="left:619px;top:559px;width:99px;text-align:right">6 490</div>
<div class="cell" style="left:720px;top:559px;width:78px;text-align:right">2 154 680</div>
<div class="cell" style="left:28px;top:580px;width:283px">Кроссовки беговые, размер 37</div>
<div class="cell" style="left:313px;top:580px;width:100px;text-align:center">женский</div>
<div class="cell" style="left:413px;top:580px;width:98px;text-align:center">бег</div>
<div class="cell" style="left:511px;top:580px;width:106px;text-align:right">333</div>
<div class="cell" style="left:619px;top:580px;width:99px;text-align:right">6 490</div>
<div class="cell" style="left:720px;top:580px;width:78px;text-align:right">2 161 170</div>
<div class="cell" style="left:28px;top:601px;width:283px">Кроссовки беговые, размер 38</div>
<div class="cell" style="left:313px;top:601px;width:100px;text-align:center">женский</div>
<div class="cell" style="left:413px;top:601px;width:98px;text-align:center">бег</div>
<div class="cell" style="left:511px;top:601px;width:106px;text-align:right">421</div>
<div class="cell" style="left:619px;top:601px;width:99px;text-align:right">6 490</div>
<div class="cell" style="left:720px;top:601px;width:78px;text-align:right">2 732 290</div>
<div class="cell" style="left:28px;top:622px;width:283px">Кроссовки беговые, размер 38</div>
<div class="cell" style="left:313px;top:622px;width:100px;text-align:center">мужской</div>
<div class="cell" style="left:413px;top:622px;width:98px;text-align:center">бег</div>
<div class="cell" style="left:511px;top:622px;width:106px;text-align:right">220</div>
<div class="cell" style="left:619px;top:622px;width:99px;text-align:right">6 990</div>
<div class="cell" style="left:720px;top:622px;width:78px;text-align:right">1 537 800</div>
<div class="cell" style="left:28px;top:643px;width:283px">Кроссовки теннисные, размер 39</div>
<div class="cell" style="left:313px;top:643px;width:100px;text-align:center">женский</div>
<div class="cell" style="left:413px;top:643px;width:98px;text-align:center">теннис</div>
<div class="cell" style="left:511px;top:643px;width:106px;text-align:right">554</div>
<div class="cell" style="left:619px;top:643px;width:99px;text-align:right">7 990</div>
<div class="cell" style="left:720px;top:643px;width:78px;text-align:right">4 426 460</div>
<div class="t" style="left:0px;top:226px;width:23px;text-align:center;font-size:14.5px;color:#222">1</div>
<div class="t" style="left:0px;top:247px;width:23px;text-align:center;font-size:14.5px;color:#222">2</div>
<div class="t" style="left:0px;top:268px;width:23px;text-align:center;font-size:14.5px;color:#222">3</div>
<div class="t" style="left:0px;top:289px;width:23px;text-align:center;font-size:14.5px;color:#222">4</div>
<div class="t" style="left:0px;top:310px;width:23px;text-align:center;font-size:14.5px;color:#1f3a2a">5</div>
<div class="t" style="left:0px;top:331px;width:23px;text-align:center;font-size:14.5px;color:#222">6</div>
<div class="t" style="left:0px;top:352px;width:23px;text-align:center;font-size:14.5px;color:#222">7</div>
<div class="t" style="left:0px;top:373px;width:23px;text-align:center;font-size:14.5px;color:#222">8</div>
<div class="t" style="left:0px;top:394px;width:23px;text-align:center;font-size:14.5px;color:#222">9</div>
<div class="t" style="left:0px;top:415px;width:23px;text-align:center;font-size:14.5px;color:#222">10</div>
<div class="t" style="left:0px;top:436px;width:23px;text-align:center;font-size:14.5px;color:#222">11</div>
<div class="t" style="left:0px;top:457px;width:23px;text-align:center;font-size:14.5px;color:#222">12</div>
<div class="t" style="left:0px;top:478px;width:23px;text-align:center;font-size:14.5px;color:#222">13</div>
<div class="t" style="left:0px;top:499px;width:23px;text-align:center;font-size:14.5px;color:#222">14</div>
<div class="t" style="left:0px;top:520px;width:23px;text-align:center;font-size:14.5px;color:#222">15</div>
<div class="t" style="left:0px;top:541px;width:23px;text-align:center;font-size:14.5px;color:#222">16</div>
<div class="t" style="left:0px;top:562px;width:23px;text-align:center;font-size:14.5px;color:#222">17</div>
<div class="t" style="left:0px;top:583px;width:23px;text-align:center;font-size:14.5px;color:#222">18</div>
<div class="t" style="left:0px;top:604px;width:23px;text-align:center;font-size:14.5px;color:#222">19</div>
<div class="t" style="left:0px;top:625px;width:23px;text-align:center;font-size:14.5px;color:#222">20</div>
<div class="t" style="left:0px;top:646px;width:23px;text-align:center;font-size:14.5px;color:#222">21</div>
<div style="left:312px;top:304px;width:103px;height:24px;border:2px solid #0b7340"></div>
<div style="left:410px;top:323px;width:6px;height:6px;background:#fff"></div>
<div style="left:411px;top:324px;width:5px;height:5px;background:#0b7340"></div>
<div style="left:1069px;top:201px;width:16px;height:462px;background:#dedede;border-left:1px solid #c6c6c6"></div>
<div style="left:1073px;top:216px;width:13px;height:268px;background:#fff;border:1px solid #c6c6c6"></div>
<div style="left:1073px;top:650px;width:13px;height:14px;background:#fff;border:1px solid #c6c6c6"></div>
<svg style="left:1076px;top:655px" width="7" height="4" viewBox="0 0 7 4"><path d="M0 0H7L3.5 4Z" fill="#555"/></svg>
<div style="left:1px;top:663px;width:1084px;height:29px;background:#e6e6e6"></div>
<div style="left:1px;top:663px;width:1068px;height:1px;background:#c6c6c6"></div>
<svg style="left:24px;top:674px" width="5" height="8" viewBox="0 0 5 8"><path d="M5 0V8L0 4Z" fill="#c8c8c8"/></svg>
<svg style="left:53px;top:674px" width="5" height="8" viewBox="0 0 5 8"><path d="M0 0V8L5 4Z" fill="#c8c8c8"/></svg>
<div style="left:97px;top:663px;width:107px;height:26px;background:#fff;border-left:1px solid #c6c6c6;border-right:1px solid #c6c6c6"></div>
<div style="left:97px;top:686px;width:107px;height:2px;background:#0b6e3e"></div>
<div class="t" style="left:109.5px;top:671px;color:#0b6e3e;font-size:12.7px;font-weight:bold">microexcel.ru</div>
<svg style="left:237px;top:670px" width="16" height="16" viewBox="0 0 16 16"><circle cx="8" cy="8" r="7.2" fill="none" stroke="#666" stroke-width="1.2"/><path d="M8 4V12M4 8H12" stroke="#666" stroke-width="1.4"/></svg>
<div style="left:653px;top:673px;width:2px;height:2px;background:#9a9a9a"></div>
<div style="left:653px;top:678px;width:2px;height:2px;background:#9a9a9a"></div>
<div style="left:653px;top:683px;width:2px;height:2px;background:#9a9a9a"></div>
<div style="left:670px;top:671px;width:400px;height:15px;background:#dedede"></div>
<div style="left:670px;top:671px;width:16px;height:15px;background:#fff;border:1px solid #c6c6c6"></div>
<svg style="left:675px;top:675px" width="4" height="7" viewBox="0 0 4 7"><path d="M4 0V7L0 3.5Z" fill="#555"/></svg>
<div style="left:685px;top:671px;width:328px;height:15px;background:#fff;border:1px solid #c6c6c6"></div>
<div style="left:1054px;top:671px;width:16px;height:15px;background:#fff;border:1px solid #c6c6c6"></div>
<svg style="left:1060px;top:675px" width="4" height="7" viewBox="0 0 4 7"><path d="M0 0V7L4 3.5Z" fill="#555"/></svg>
<div style="left:1px;top:692px;width:1084px;height:18px;background:#f3f3f3"></div>
<div style="left:1px;top:692px;width:1084px;height:1px;background:#dadada"></div>
<svg style="left:5px;top:696px" width="14" height="13" viewBox="0 0 14 13"><circle cx="2.8" cy="2.8" r="2.8" fill="#6b6060"/><rect x="7" y="0.5" width="6.5" height="2.5" fill="#6b6060"/><path d="M1.5 7V12.5H13V2" fill="none" stroke="#6b6060" stroke-width="1"/><path d="M5 5.5H6.5M8 5.5H9.5M3 7.5H4.5M5.5 7.5H7M8 7.5H9.5M3 9.5H4.5M5.5 9.5H7M8 9.5H9.5" stroke="#6b6060" stroke-width="1"/></svg>
<div style="left:791px;top:692px;width:38px;height:17px;background:#d2d2d2"></div>
<svg style="left:802px;top:695px" width="14" height="12" viewBox="0 0 14 12"><rect x="0.5" y="0.5" width="13" height="11" fill="none" stroke="#555"/><path d="M0.5 4H13.5M0.5 8H13.5M5 0.5V11.5M9 0.5V11.5" stroke="#555"/></svg>
<svg style="left:840px;top:695px" width="14" height="12" viewBox="0 0 14 12"><rect x="0.5" y="0.5" width="13" height="11" fill="none" stroke="#555"/><rect x="3" y="2.5" width="8" height="7" fill="none" stroke="#555"/><path d="M4 5H10M4 7H10" stroke="#555"/></svg>
<svg style="left:878px;top:694px" width="14" height="13" viewBox="0 0 14 13"><path d="M0.5 0.5H13.5V12.5H0.5Z" fill="none" stroke="#555"/><path d="M5.5 0.5V6.5H0.5M9.5 0.5V3.5H13.5" fill="none" stroke="#555"/></svg>
<div style="left:910px;top:701px;width:7px;height:2px;background:#555"></div>
<div style="left:920px;top:701px;width:100px;height:1px;background:#999"></div>
<div style="left:969px;top:696px;width:4px;height:11px;background:#666"></div>
<div style="left:1023px;top:701px;width:8px;height:1.5px;background:#555"></div>
<div style="left:1026px;top:698px;width:1.5px;height:8px;background:#555"></div>
<div class="t" style="left:1042.5px;top:697px;color:#333;font-size:11px">100 %</div>
<div style="left:877px;top:88px;width:209px;height:151px;background:#fff;border:1px solid #c6c6c6;box-shadow:0 2px 3px rgba(0,0,0,0.18)"></div>
<div style="left:880px;top:163px;width:202px;height:25px;background:#c8c8c8"></div>
<div class="t" style="left:911.6px;top:96.5px;font-size:11.6px;color:#4a4a4a">Сортировка от <u>А</u> до Я</div>
<div class="t" style="left:911.6px;top:120.5px;font-size:11.6px;color:#4a4a4a">Сортировка от <u>Я</u> до А</div>
<div class="t" style="left:911.6px;top:144.5px;font-size:11.6px;color:#4a4a4a"><u>Н</u>астраиваемая сортировка...</div>
<div class="t" style="left:911.6px;top:170px;font-size:11.6px;color:#111"><u>Ф</u>ильтр</div>
<div class="t" style="left:911.6px;top:194px;font-size:11.6px;color:#b9b9b9">О<u>ч</u>истить</div>
<div class="t" style="left:911.6px;top:218px;font-size:11.6px;color:#b9b9b9"><u>П</u>овторить</div>
<div style="left:877.5px;top:161px;width:206px;height:29px;border:3px solid #f00;border-radius:10px"></div>
<svg style="left:884px;top:92.5px" width="15" height="17" viewBox="0 0 15 17"><text x="0" y="7.5" font-size="9" font-weight="bold" fill="#0a6cc0" font-family="Liberation Sans">A</text><text x="0.5" y="15.5" font-size="9" fill="#555" font-family="Liberation Sans">Я</text><path d="M11.5 1V15.5M9 13L11.5 15.5L14 13" fill="none" stroke="#555" stroke-width="1.1"/></svg>
<svg style="left:884px;top:116.5px" width="15" height="17" viewBox="0 0 15 17"><text x="0.5" y="7.5" font-size="9" fill="#555" font-family="Liberation Sans">Я</text><text x="0" y="15.5" font-size="9" font-weight="bold" fill="#0a6cc0" font-family="Liberation Sans">A</text><path d="M11.5 1V15.5M9 13L11.5 15.5L14 13" fill="none" stroke="#555" stroke-width="1.1"/></svg>
<svg style="left:883px;top:142px" width="16" height="16" viewBox="0 0 16 16"><rect x="0.5" y="0.5" width="15" height="15" fill="#fff" stroke="#555"/><rect x="0" y="0" width="16" height="2" fill="#1e6fb5"/><path d="M5 4V13M3 11L5 13L7 11M11 13V4M9 6L11 4L13 6" fill="none" stroke="#1e6fb5" stroke-width="1.2"/></svg>
<svg style="left:883px;top:168px" width="16" height="15" viewBox="0 0 16 15"><path d="M0 0H16L10 6.5V15H6V6.5Z" fill="#6b6b6b"/></svg>
<svg style="left:884px;top:194px" width="15" height="14" viewBox="0 0 15 14"><path d="M0 0H11L7 4.5V10H4V4.5Z" fill="#c8c8c8"/><path d="M7 7L14 13.5M14 7L7 13.5" stroke="#c8c8c8" stroke-width="1.2"/></svg>
<svg style="left:884px;top:216px" width="15" height="15" viewBox="0 0 15 15"><path d="M0 0H11L7 4.5V10H4V4.5Z" fill="#c8c8c8"/><path d="M8 11A3.5 3.5 0 0 1 14 9M14 11A3.5 3.5 0 0 1 8 13" fill="none" stroke="#c8c8c8" stroke-width="1.2"/></svg>
<div style="left:0px;top:62px;width:1px;height:649px;background:#00733f"></div>
<div style="left:1085px;top:62px;width:2px;height:649px;background:#00733f"></div>
<div style="left:0px;top:710px;width:1087px;height:1px;background:#00733f"></div>
</body></html>
